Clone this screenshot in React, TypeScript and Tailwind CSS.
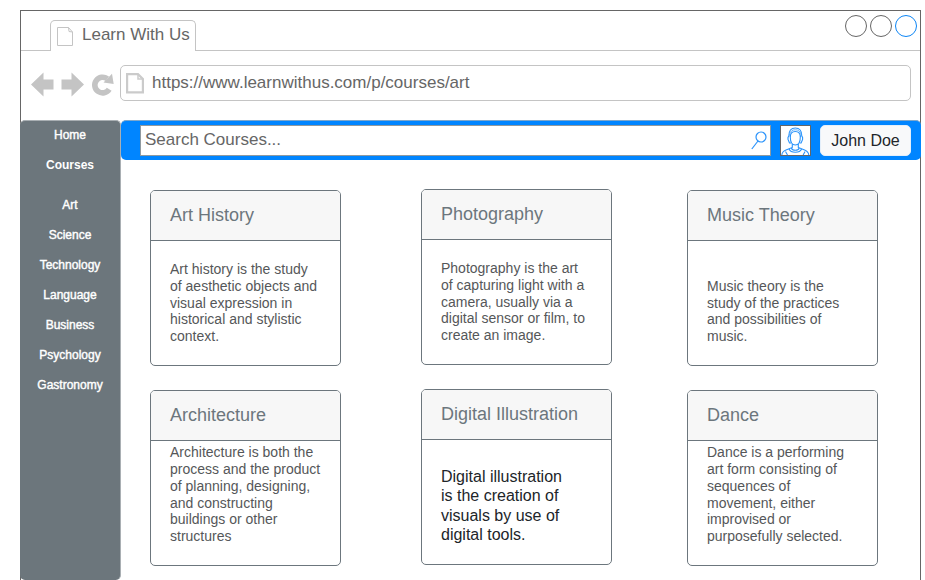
type Course = {
  title: string;
  lines: string[];
  large?: boolean;
};

const courses: Course[] = [
  {
    title: "Art History",
    lines: ["Art history is the study", "of aesthetic objects and", "visual expression in", "historical and stylistic", "context."],
  },
  {
    title: "Photography",
    lines: ["Photography is the art", "of capturing light with a", "camera, usually via a", "digital sensor or film, to", "create an image."],
  },
  {
    title: "Music Theory",
    lines: ["Music theory is the", "study of the practices", "and possibilities of", "music."],
  },
  {
    title: "Architecture",
    lines: ["Architecture is both the", "process and the product", "of planning, designing,", "and constructing", "buildings or other", "structures"],
  },
  {
    title: "Digital Illustration",
    lines: ["Digital illustration", "is the creation of", "visuals by use of", "digital tools."],
    large: true,
  },
  {
    title: "Dance",
    lines: ["Dance is a performing", "art form consisting of", "sequences of", "movement, either", "improvised or", "purposefully selected."],
  },
];

const subjects = ["Art", "Science", "Technology", "Language", "Business", "Psychology", "Gastronomy"];

function PageIcon({ bold = false }: { bold?: boolean }) {
  return bold ? (
    <svg width="18" height="21" viewBox="0 0 18 21" className="block shrink-0" fill="none" stroke="#cbcbcb" strokeWidth="2.2">
      <path d="M1.1 1.1H12L16.900 6V19.400H1.100Z" />
      <path d="M12 1.500V6H16.500" strokeWidth="1.500" />
    </svg>
  ) : (
    <svg width="17" height="20" viewBox="0 0 17 20" className="block shrink-0" fill="none" stroke="#c4c4c4">
      <path d="M.5 .5H11.5L15.5 5V18.5H.5Z" />
      <path d="M11.5 .5L12 4.5L15.5 5" />
    </svg>
  );
}

function NavIcons() {
  return (
    <svg width="83" height="26" viewBox="31 72 83 26" className="block shrink-0" fill="#c4c4c4">
      <path d="M31 84.5L43.5 72.5V79.5H53.5V89.5H43.5V96.5Z" />
      <path d="M84 84.5L71.5 72.5V79.5H61.5V89.5H71.5V96.5Z" />
      <path d="M107.3 78.800A7.800 7.800 0 1 0 109.200 89.200" fill="none" stroke="#c4c4c4" strokeWidth="5.600" />
      <path d="M112 73.800L113.700 84L103.500 82.500Z" />
    </svg>
  );
}

function Avatar() {
  return (
    <svg width="31" height="31" viewBox="0 0 31 31" className="block shrink-0" fill="none" stroke="#2a93fb" strokeWidth="1.1">
      <rect x=".5" y=".5" width="30" height="30" fill="#fff" stroke="#666" strokeWidth="1" />
      <path d="M10.300 12C10.300 8.500 12 6.500 15.300 6.500C18.600 6.500 20.300 8.500 20.300 12C20.300 16.500 18.500 20 15.300 20C12.100 20 10.300 16.500 10.300 12Z" />
      <path d="M11 18H9.500L8 14.500V12.500L8.800 11C8.800 6 11 3 15.300 3C19.600 3 21.800 6 21.800 11L22.600 12.500V14.500L21.100 18H19.600" />
      <path d="M10.300 12L9.500 9.500C10.500 6 12.500 4.800 15.300 4.800C18.100 4.800 20.100 6 21.100 9.500L20.300 12" strokeWidth=".7" />
      <path d="M12.300 19V22.500L6 25C3.500 26 2 28 1.800 30M18.300 19V22.500L24.600 25C27 26 28.600 28 28.800 30" />
      <path d="M9 24C10.800 28.300 19.800 28.300 21.600 24M11.300 23C12.500 26 18.100 26 19.300 23M5.500 26.500L7.500 30M25.100 26.500L23.100 30" />
    </svg>
  );
}

function CourseCard({ course, index }: { course: Course; index: number }) {
  return (
    <article
      className={`flex h-44 w-[191px] flex-col overflow-hidden rounded-[5px] border border-[#6c767d] bg-white ${
        index % 3 === 1 ? "-mt-px" : ""
      }`}
    >
      <h2 className="flex h-[50px] shrink-0 items-center border-b border-[#6c767d] bg-[#f7f7f7] pl-[19px] text-[18px] text-[#6c767d]">
        {course.title}
      </h2>
      <p
        className={`mt-auto whitespace-nowrap pb-5 pl-[19px] ${
          course.large ? "text-[16px] leading-[19.2px] text-[#212529]" : "text-[14px] leading-[16.8px] text-[#555759]"
        }`}
      >
        {course.lines.map((line) => (
          <span key={line} className="block">
            {line}
          </span>
        ))}
      </p>
    </article>
  );
}

export default function App() {
  return (
    <div className="h-[580px] w-[925px] overflow-hidden bg-white pl-5 pt-2.5 font-['Liberation_Sans',Arial,sans-serif]">
      <div className="flex h-[570px] w-[901px] flex-col border-x border-t border-[#666]">
        <header className="flex h-10 shrink-0 items-end">
          <div className="h-10 w-[29px] border-b border-[#c4c4c4]" />
          <div className="flex h-[31px] w-[146px] rounded-t-[5px] border-x border-t border-[#c4c4c4] pl-1.5 pt-1.5">
            <PageIcon />
            <span className="-mt-0.5 ml-2 whitespace-nowrap text-[17px] leading-5 text-[#666]">Learn With Us</span>
          </div>
          <div className="flex h-10 flex-1 justify-end gap-[3px] border-b border-[#c4c4c4] pr-[3px] pt-1">
            <i className="size-[22px] rounded-full border border-[#666]" />
            <i className="size-[22px] rounded-full border border-[#666]" />
            <i className="size-[22px] rounded-full border border-[#0c85f5]" />
          </div>
        </header>
        <div className="flex h-[69px] shrink-0 pl-2.5 pr-[9px] pt-3.5">
          <div className="w-[89px] pt-[7px]">
            <NavIcons />
          </div>
          <div className="flex h-9 flex-1 rounded-[5px] border border-[#c4c4c4] pl-[5px] pt-[7px]">
            <PageIcon bold />
            <span className="ml-2 text-[17px] leading-5 text-[#666]">https://www.learnwithus.com/p/courses/art</span>
          </div>
        </div>
        <div className="-ml-px flex min-h-0 flex-1">
          <nav className="flex w-[101px] flex-col rounded-[5px] border-r border-t border-[#a9afb3] bg-[#6c767c] text-center text-[12px] leading-[30px] text-white">
            <a className="-mt-px [-webkit-text-stroke:0.4px_white]">Home</a>
            <a className="mb-2.5 font-bold">Courses</a>
            {subjects.map((subject) => (
              <a key={subject} className="[-webkit-text-stroke:0.4px_white]">
                {subject}
              </a>
            ))}
          </nav>
          <main className="-mr-px flex-1">
            <div className="flex h-10 rounded-[5px] border-t border-[#7fa8cc] bg-[#0085ff] pl-[19px] pt-1">
              <div className="flex h-[31px] w-[631px] items-center justify-between border border-[#8f999f] bg-white pl-1 pr-[3px]">
                <span className="-mt-0.5 text-[17px] leading-5 text-[#666]">Search Courses...</span>
                <svg width="16" height="19" viewBox="0 0 16 19" fill="none" stroke="#2a93fb" strokeWidth="1.2">
                  <circle cx="10" cy="6" r="5" />
                  <path d="M7 10L.8 18" />
                </svg>
              </div>
              <div className="ml-[9px]">
                <Avatar />
              </div>
              <div className="ml-[9px] flex h-[31px] w-[91px] items-center justify-center rounded-[5px] border border-[#e4effa] bg-[#f8f9fa] text-[16px] text-[#212529]">
                John Doe
              </div>
            </div>
            <div className="grid grid-cols-[271px_266px_191px] gap-y-6 pl-[29px] pt-[30px]">
              {courses.map((course, index) => (
                <CourseCard key={course.title} course={course} index={index} />
              ))}
            </div>
          </main>
        </div>
      </div>
    </div>
  );
}
